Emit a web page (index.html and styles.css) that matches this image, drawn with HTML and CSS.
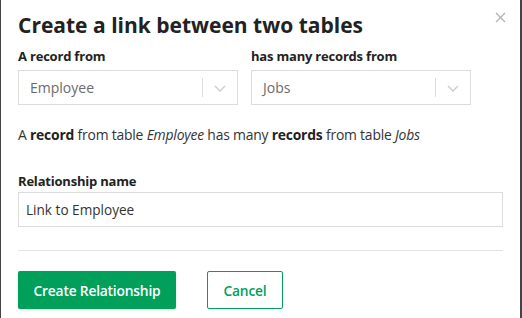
FILE: index.html
```html
<!DOCTYPE html>
<html>
<head>
<meta charset="utf-8">
<link rel="stylesheet" href="styles.css">
</head>
<body>
<div class="frame">
  <div class="dialog">
    <button class="close" aria-label="Close">
      <svg width="11" height="11" viewBox="0 0 11 11"><path d="M1 1L10 10M10 1L1 10" stroke="#b3b3b3" stroke-width="1.3" fill="none"/></svg>
    </button>
    <h1 class="title">Create a link between two tables</h1>
    <div class="pair">
      <div class="field">
        <div class="label">A record from</div>
        <div class="select">
          <span class="value">Employee</span>
          <span class="sep"></span>
          <span class="arrow"><svg width="12" height="7" viewBox="0 0 12 7"><path d="M1 1L6 6L11 1" stroke="#cccccc" stroke-width="1.4" fill="none"/></svg></span>
        </div>
      </div>
      <div class="field">
        <div class="label">has many records from</div>
        <div class="select">
          <span class="value">Jobs</span>
          <span class="sep"></span>
          <span class="arrow"><svg width="12" height="7" viewBox="0 0 12 7"><path d="M1 1L6 6L11 1" stroke="#cccccc" stroke-width="1.4" fill="none"/></svg></span>
        </div>
      </div>
    </div>
    <p class="sentence">A <b>record</b> from table <i>Employee</i> has many <b>records</b> from table <i>Jobs</i></p>
    <div class="label name-label">Relationship name</div>
    <div class="input">Link to Employee</div>
    <div class="rule"></div>
    <div class="actions">
      <button class="btn primary">Create Relationship</button>
      <button class="btn secondary">Cancel</button>
    </div>
  </div>
</div>
</body>
</html>
```
FILE: styles.css
```css
* { box-sizing: border-box; }
html, body { margin: 0; padding: 0; background: #fff; }
body { font-family: "Open Sans", Lato, sans-serif; color: #222; }
.frame {
  width: 522px;
  height: 318px;
  border-left: 1px solid #444;
  border-right: 2px solid #444;
  overflow: hidden;
}
.dialog {
  position: relative;
  padding: 11px 17px 0 17px;
}
.close {
  position: absolute;
  top: 12px;
  right: 14px;
  border: 0;
  background: none;
  padding: 0;
  width: 11px;
  height: 11px;
  line-height: 0;
}
.title {
  margin: 0;
  font-size: 21px;
  font-weight: 700;
  line-height: 28px;
  color: #222;
  letter-spacing: 0;
}
.pair {
  display: grid;
  grid-template-columns: 220px 220px;
  column-gap: 13px;
  margin-top: 8px;
}
.label {
  font-size: 13px;
  font-weight: 700;
  line-height: 18px;
  color: #222;
  margin-bottom: 5px;
  letter-spacing: -0.2px;
}
.select {
  display: flex;
  align-items: center;
  height: 35px;
  border: 1px solid #dcdcdc;
  background: #fff;
}
.value {
  flex: 1;
  padding-left: 11px;
  font-size: 14px;
  color: #6b6b6b;
}
.sep {
  width: 1px;
  height: 19px;
  background: #dcdcdc;
}
.arrow {
  width: 34px;
  display: flex;
  justify-content: center;
  line-height: 0;
  padding-top: 2px;
}
.sentence {
  margin: 21px 0 0 0;
  font-size: 13.9px;
  line-height: 18px;
  color: #333;
  letter-spacing: -0.2px;
}
.sentence b { color: #222; }
.name-label { margin-top: 28px; margin-bottom: 2px; }
.input {
  height: 35px;
  border: 1px solid #dcdcdc;
  padding-left: 7px;
  display: flex;
  align-items: center;
  font-size: 13.6px;
  color: #333;
}
.rule {
  height: 1px;
  background: #e2e2e2;
  margin-top: 23px;
}
.actions {
  display: flex;
  gap: 31px;
  margin-top: 20px;
}
.btn {
  height: 38px;
  font-family: "Open Sans", Lato, sans-serif;
  font-size: 13.8px;
  font-weight: 600;
  border-radius: 2px;
  padding: 0;
  letter-spacing: -0.2px;
}
.primary {
  width: 158px;
  background: #00a05a;
  color: #fff;
  border: 0;
  box-shadow: 0 1px 3px rgba(0,0,0,0.15);
}
.secondary {
  width: 76px;
  background: #fff;
  color: #00a05a;
  border: 1px solid #00a05a;
}
```
